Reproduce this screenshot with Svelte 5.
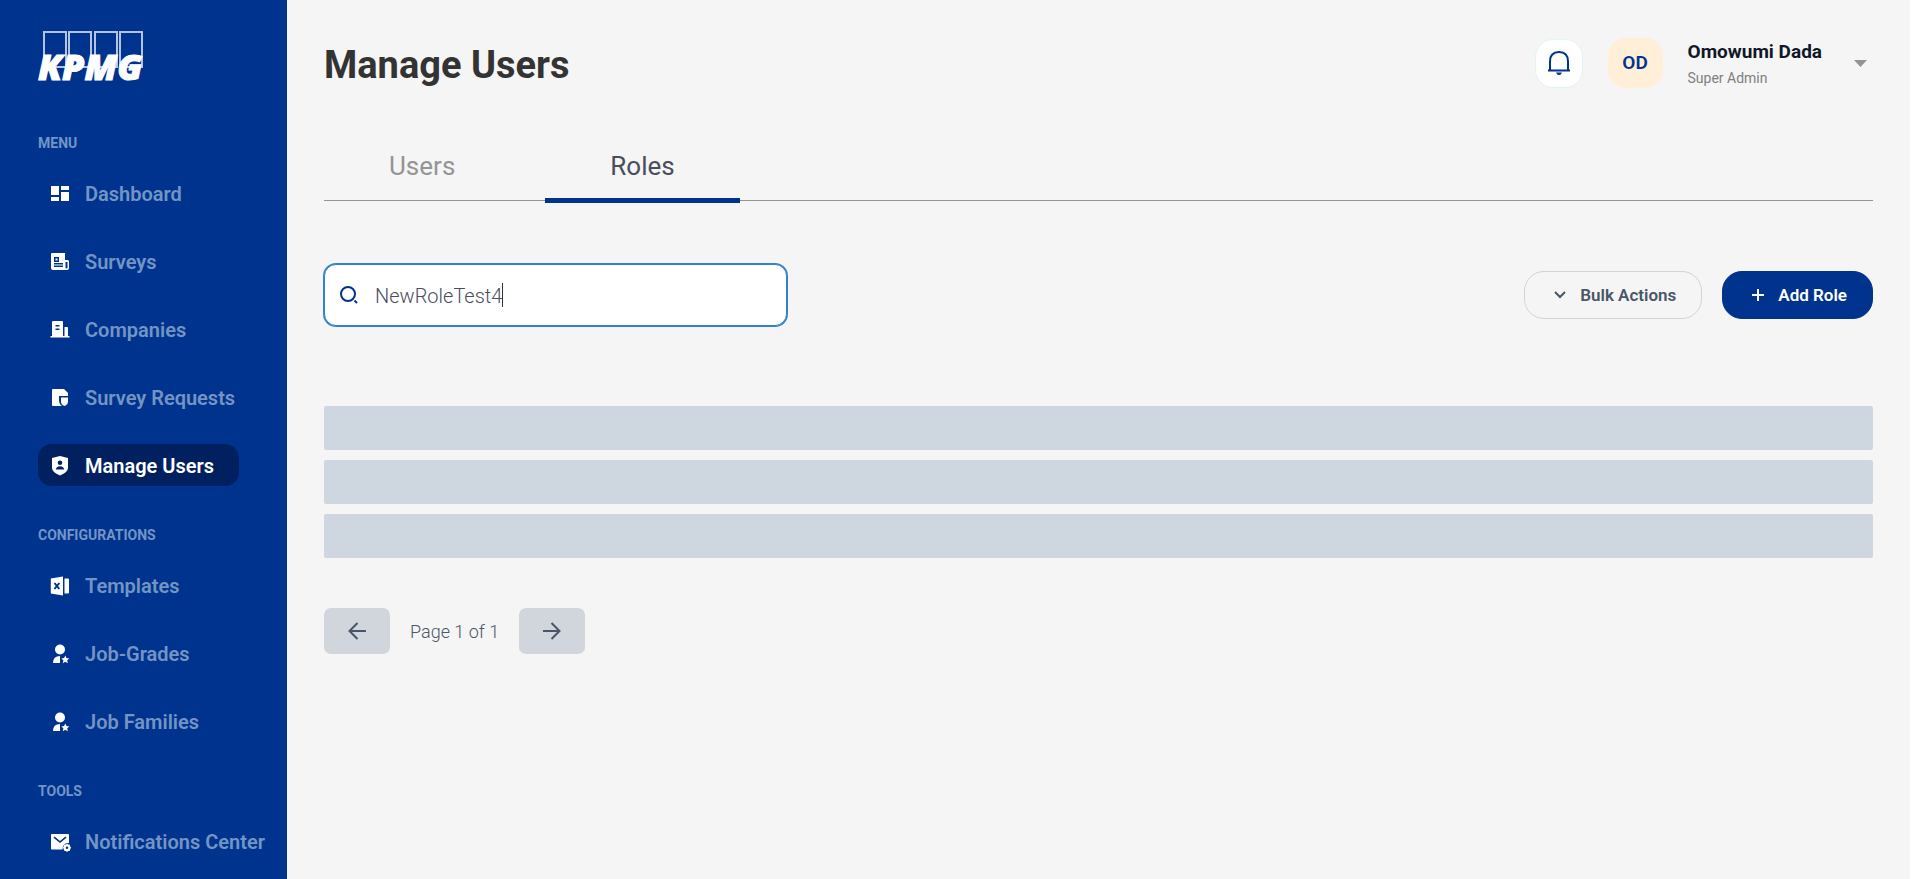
<script>
  let query = $state('NewRoleTest4');
  let activeTab = $state('Roles');

  const sections = [
    {
      title: 'MENU',
      items: [
        { label: 'Dashboard', icon: 'dashboard' },
        { label: 'Surveys', icon: 'news' },
        { label: 'Companies', icon: 'building' },
        { label: 'Survey Requests', icon: 'request' },
        { label: 'Manage Users', icon: 'shield', active: true }
      ]
    },
    {
      title: 'CONFIGURATIONS',
      items: [
        { label: 'Templates', icon: 'excel' },
        { label: 'Job-Grades', icon: 'star' },
        { label: 'Job Families', icon: 'star' }
      ]
    },
    {
      title: 'TOOLS',
      items: [{ label: 'Notifications Center', icon: 'mail' }]
    }
  ];

  const tabs = ['Users', 'Roles'];
  const placeholders = [1, 2, 3];
</script>

<div class="app">
  <aside class="sidebar">
    <svg class="logo" viewBox="0 0 108 52" role="img" aria-label="KPMG">
      <g class="logo-boxes">
        <rect x="6" y="1" width="22" height="35" />
        <rect x="31" y="1" width="22" height="35" />
        <rect x="57" y="1" width="22" height="35" />
        <rect x="82" y="1" width="22" height="35" />
      </g>
      <text x="0" y="49">KPMG</text>
    </svg>

    <nav>
      {#each sections as section}
        <section>
          <h2>{section.title}</h2>
          <ul>
            {#each section.items as item}
              <li>
                <a href="#top" class:active={item.active}>
                  <svg class="icon" viewBox="0 0 20 20" aria-hidden="true">
                    {#if item.icon === 'dashboard'}
                      <path d="M1 2h8v9H1zM1 13h8v4H1zM11 2h8v4h-8zM11 8h8v9h-8z" />
                    {:else if item.icon === 'news'}
                      <path fill-rule="evenodd" d="M2 1h13v7h3l1 1v7q0 2-2 2H3q-2 0-2-2V2q0-1 1-1zM4 5v5h5V5zM5.500 6.500h2v2h-2zM4 11v1.500h9V11zM4 13.500V15h9v-1.500zM15.500 10v6q1 .8 2 0v-6z" />
                    {:else if item.icon === 'building'}
                      <path fill-rule="evenodd" d="M2 16V2q0-1 1-1h9q1 0 1 1v14h1.500V7H17q1 0 1 1v8h1.500v1.500H.5V16zM5.500 5v1.500h4V5zM5.500 8.500V10h4V8.500z" />
                    {:else if item.icon === 'request'}
                      <path d="M3 1h11l4 4v3H9v4q0 4 3 6H3q-1 0-1-1V2q0-1 1-1z" />
                      <path d="M11 9.500h7v4q0 3-3.500 4.500Q11 16.500 11 13.500z" />
                    {:else if item.icon === 'shield'}
                      <path fill-rule="evenodd" d="M10 0l8 2v10q0 4-8 7.500Q2 16 2 12V2zM10 4.500a2.300 2.300 0 1 0 0 4.600a2.300 2.300 0 1 0 0-4.600zM5.800 13.500h8.400q-.8-3.200-4.200-3.200t-4.200 3.200z" />
                    {:else if item.icon === 'excel'}
                      <path d="M.8 2.500L13 .5v19L.8 17.500zM14.500 2.500h3.500q1 0 1 1v13q0 1-1 1h-3.500z" />
                      <path class="mark" d="M4.500 7l4.800 6M9.300 7l-4.800 6" />
                    {:else if item.icon === 'star'}
                      <circle cx="10" cy="5.500" r="5" />
                      <path d="M10 12v7H3q0-7 7-7zM15.300 11.500l1.200 2.600 2.800.3-2.100 1.900.6 2.900-2.500-1.500-2.500 1.500.6-2.900-2.100-1.900 2.800-.3z" />
                    {:else}
                      <path fill-rule="evenodd" d="M1.800 2h16.400q.8 0 .8.800V11q-6-1-6.500 6.500H1.800Q1 17.500 1 16.700V2.800Q1 2 1.800 2zM4.500 4.500L3.500 5.700 10 11l6.500-5.300-1-1.200L10 9z" />
                      <path fill-rule="evenodd" d="M17 11.500l1.200 1.100 1.700.1.300 1.700 1 1.400-1 1.300-.3 1.700-1.700.1L17 20l-1.200-1.100-1.700-.1-.3-1.700-1-1.300 1-1.400.3-1.700 1.700-.1zM17 14.400a1.300 1.300 0 1 0 0 2.600a1.300 1.300 0 1 0 0-2.600z" />
                    {/if}
                  </svg>
                  {item.label}
                </a>
              </li>
            {/each}
          </ul>
        </section>
      {/each}
    </nav>
  </aside>

  <main>
    <header>
      <h1>Manage Users</h1>
      <div class="account">
        <button class="bell" aria-label="Notifications">
          <svg width="24" height="26" viewBox="0 0 24 26" aria-hidden="true">
            <path d="M3 20V11.500Q3 2 12 2t9 9.500V20M1 20.500h22" />
            <path class="clapper" d="M9 22.500h6q-.8 2.500-3 2.500t-3-2.500z" />
          </svg>
        </button>
        <div class="avatar">OD</div>
        <button class="profile">
          <span class="who">
            <strong>Omowumi Dada</strong>
            <small>Super Admin</small>
          </span>
          <svg width="13" height="7" viewBox="0 0 13 7" aria-hidden="true"><path d="M0 0h13L6.500 7z" /></svg>
        </button>
      </div>
    </header>

    <div class="tabs" role="tablist">
      {#each tabs as tab}
        <button role="tab" aria-selected={tab === activeTab} onclick={() => (activeTab = tab)}>{tab}</button>
      {/each}
    </div>

    <div class="toolbar">
      <label class="search">
        <svg width="18" height="18" viewBox="0 0 18 18" aria-hidden="true">
          <circle cx="8" cy="8" r="7" />
          <path d="M14.500 14.500l2.500 2.500" />
        </svg>
        <input type="text" aria-label="Search roles" bind:value={query} />
        <span class="caret"></span>
      </label>
      <div class="actions">
        <button class="bulk">
          <svg width="12" height="12" viewBox="0 0 12 12" aria-hidden="true"><path d="M1 3l5 5 5-5" /></svg>
          Bulk Actions
        </button>
        <button class="add">
          <svg width="12" height="12" viewBox="0 0 12 12" aria-hidden="true"><path d="M6 0v12M0 6h12" /></svg>
          Add Role
        </button>
      </div>
    </div>

    <div class="skeletons" aria-busy="true">
      {#each placeholders as row (row)}
        <div class="skeleton"></div>
      {/each}
    </div>

    <div class="pager">
      <button aria-label="Previous page">
        <svg width="18" height="18" viewBox="0 0 18 18" aria-hidden="true"><path d="M18 9H2M9.500 1L1.500 9l8 8" /></svg>
      </button>
      <span>Page 1 of 1</span>
      <button aria-label="Next page">
        <svg width="18" height="18" viewBox="0 0 18 18" aria-hidden="true"><path d="M0 9h16M8.500 1l8 8-8 8" /></svg>
      </button>
    </div>
  </main>
</div>

<style>
  :global(body) {
    background: #fff;
  }
  .app {
    display: flex;
    height: 100vh;
    padding-right: 10px;
    overflow: hidden;
    font-family: Roboto, 'Liberation Sans', sans-serif;
    color: #4a5568;
  }
  h1, h2, ul {
    margin: 0;
    padding: 0;
  }
  button {
    margin: 0;
    padding: 0;
    border: 0;
    background: none;
    font: inherit;
    color: inherit;
    cursor: pointer;
  }
  svg {
    flex: none;
    fill: none;
  }

  .sidebar {
    box-sizing: border-box;
    flex: none;
    width: 287px;
    padding: 31px 0 0 38px;
    background: #00338d;
    overflow: hidden;
  }
  .logo {
    display: block;
    width: 108px;
    height: 52px;
    margin-bottom: 49px;
    overflow: visible;
  }
  .logo-boxes {
    stroke: #b4c4e0;
    stroke-width: 2;
  }
  .logo text {
    fill: #fff;
    stroke: #fff;
    stroke-width: 1;
    font: italic 800 36px 'Open Sans', 'Noto Sans', sans-serif;
  }
  nav {
    display: flex;
    flex-direction: column;
    gap: 38px;
  }
  h2 {
    margin-bottom: 19px;
    padding-top: 1px;
    color: #7395c6;
    font-size: 14px;
    font-weight: 700;
    line-height: 20px;
  }
  ul {
    display: flex;
    flex-direction: column;
    align-items: flex-start;
    gap: 26px;
    list-style: none;
  }
  li a {
    display: flex;
    align-items: center;
    gap: 15px;
    box-sizing: border-box;
    height: 42px;
    min-width: 201px;
    padding: 2px 0 0 12px;
    border-radius: 14px;
    color: #7395c6;
    font-size: 20px;
    font-weight: 600;
    text-decoration: none;
    white-space: nowrap;
  }
  li a.active {
    background: #00205f;
    color: #fff;
  }
  .icon {
    width: 20px;
    height: 20px;
    fill: #fff;
    overflow: visible;
  }
  .icon .mark {
    fill: none;
    stroke: #00338d;
    stroke-width: 2;
  }

  main {
    flex: 1;
    min-width: 0;
    padding: 38px 37px 0;
    background: #f5f5f5;
  }
  header {
    display: flex;
    align-items: center;
    justify-content: space-between;
    height: 50px;
  }
  h1 {
    padding-top: 4px;
    color: #333;
    font-size: 38px;
    font-weight: 700;
    line-height: 50px;
  }
  .account {
    display: flex;
    align-items: center;
  }
  .bell {
    display: flex;
    align-items: center;
    justify-content: center;
    box-sizing: border-box;
    width: 48px;
    height: 49px;
    border: 1px solid #e1f3fb;
    border-radius: 18px;
    background: #fff;
  }
  .bell path {
    stroke: #00338d;
    stroke-width: 2;
  }
  .bell .clapper {
    fill: #00338d;
    stroke: none;
  }
  .avatar {
    width: 55px;
    margin: 0 25px;
    border-radius: 18px;
    background: #ffefd9;
    color: #00338d;
    font-size: 19px;
    font-weight: 600;
    line-height: 50px;
    text-align: center;
  }
  .profile {
    display: flex;
    align-items: center;
    gap: 32px;
    padding-right: 6px;
    text-align: left;
  }
  .profile path {
    fill: #949494;
  }
  .who {
    display: flex;
    flex-direction: column;
    padding-top: 3px;
  }
  .who strong {
    color: #101828;
    font-size: 19px;
    font-weight: 700;
    line-height: 26px;
  }
  .who small {
    color: #808080;
    font-size: 14px;
    font-weight: 400;
    line-height: 26px;
  }

  .tabs {
    display: flex;
    gap: 25px;
    margin-top: 44px;
    height: 68px;
    border-bottom: 1px solid #949494;
  }
  .tabs button {
    box-sizing: border-box;
    height: 71px;
    padding: 2px 65px 0;
    border-bottom: 5px solid transparent;
    color: #949494;
    font-size: 26px;
  }
  .tabs button[aria-selected='true'] {
    border-color: #00338d;
    color: #4a4d5c;
  }

  .toolbar {
    display: flex;
    align-items: center;
    justify-content: space-between;
    margin-top: 63px;
  }
  .search {
    display: flex;
    align-items: center;
    box-sizing: border-box;
    width: calc(30% - 2px);
    height: 62px;
    padding: 0 15px;
    border: 1px solid #3182ce;
    border-radius: 12px;
    box-shadow: 0 0 0 1px #3182ce;
    background: #fff;
  }
  .search svg {
    margin-right: 17px;
    stroke: #00338d;
    stroke-width: 2;
  }
  .search input {
    field-sizing: content;
    min-width: 0;
    padding: 2px 0 0;
    border: 0;
    outline: 0;
    background: none;
    color: #4a4d5c;
    caret-color: transparent;
    font: 300 20px Roboto, sans-serif;
  }
  .caret {
    width: 1px;
    height: 24px;
    background: #333;
  }
  .actions {
    display: flex;
    gap: 20px;
  }
  .actions button {
    display: flex;
    align-items: center;
    gap: 14px;
    box-sizing: border-box;
    height: 48px;
    padding: 0 25px 0 29px;
    border: 1px solid #d3d3d3;
    border-radius: 20px;
    font-size: 17px;
    font-weight: 600;
  }
  .actions .add {
    border-color: #00338d;
    background: #00338d;
    color: #fff;
  }
  .actions path {
    stroke: currentColor;
    stroke-width: 2;
  }

  .skeletons {
    display: flex;
    flex-direction: column;
    gap: 10px;
    margin-top: 80px;
  }
  .skeleton {
    height: 44px;
    border-radius: 2px;
    background: #ced6e0;
  }

  .pager {
    display: flex;
    align-items: center;
    gap: 20px;
    margin-top: 50px;
    font-size: 18px;
    font-weight: 300;
  }
  .pager button {
    display: flex;
    align-items: center;
    justify-content: center;
    width: 66px;
    height: 46px;
    border-radius: 7px;
    background: #d1d5dc;
  }
  .pager path {
    stroke: #4a5568;
    stroke-width: 2;
  }
</style>
